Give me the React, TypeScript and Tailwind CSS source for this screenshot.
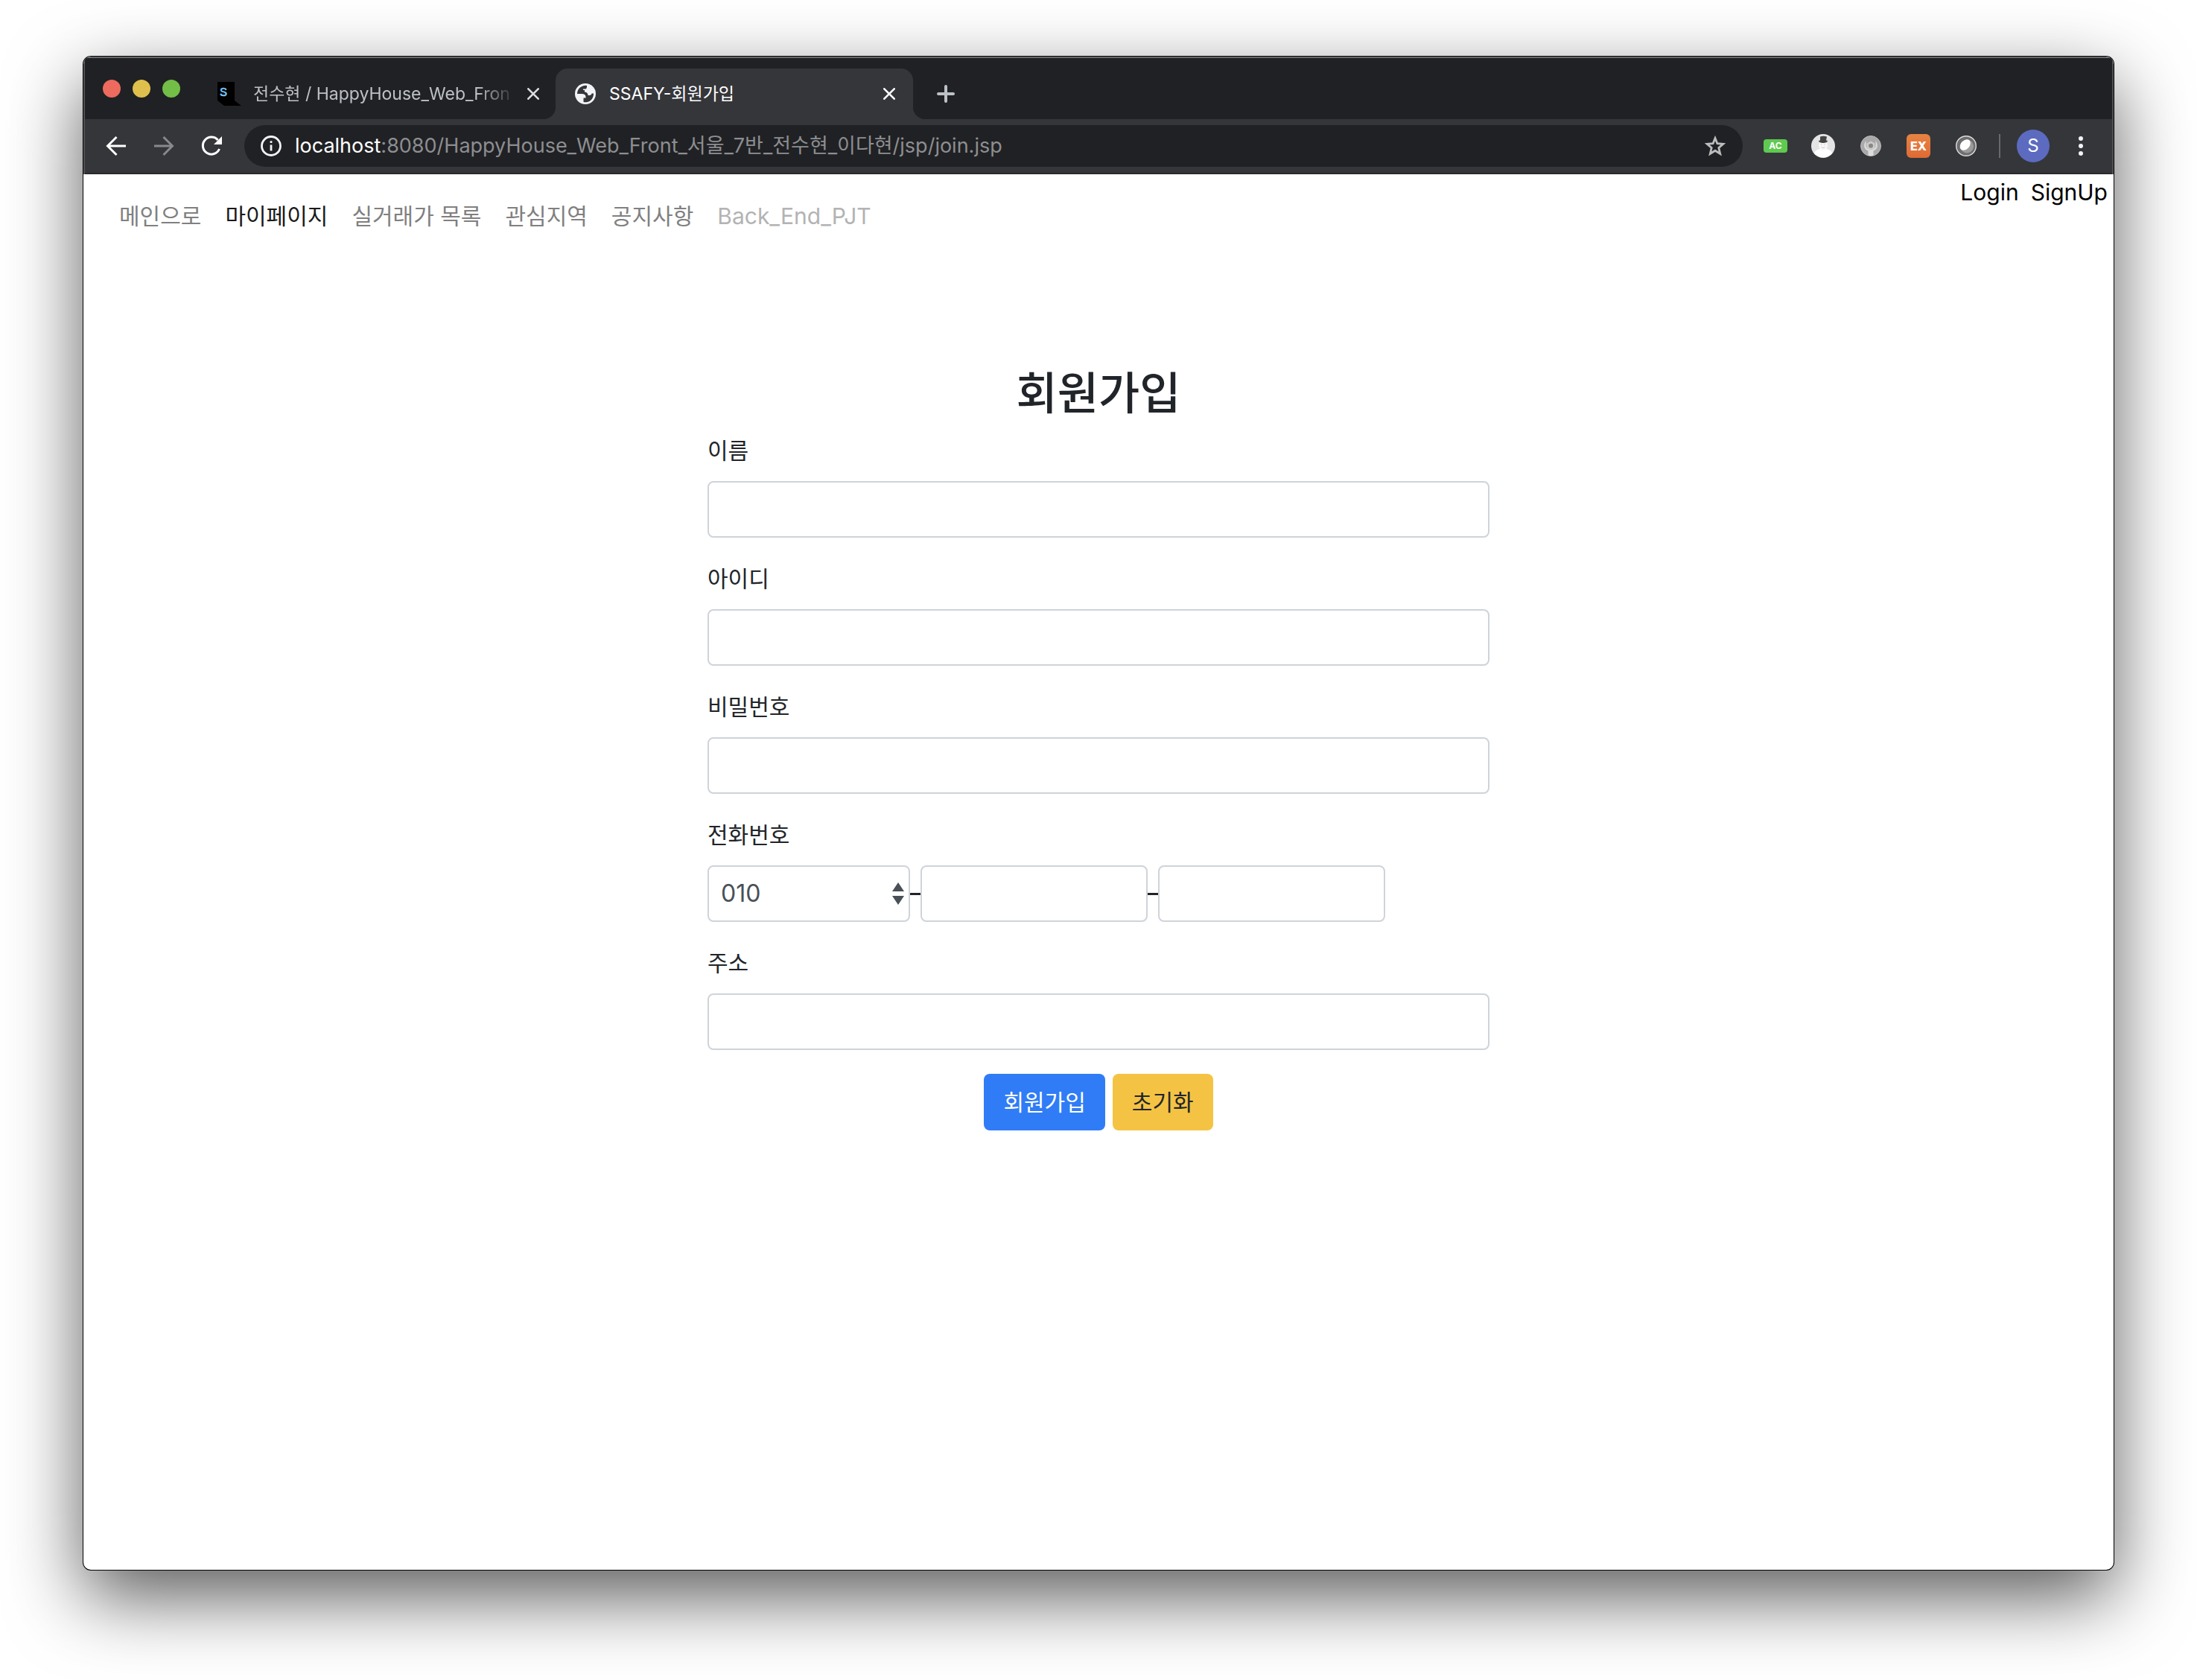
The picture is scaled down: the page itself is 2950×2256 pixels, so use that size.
import type { ReactNode } from "react";

const links = [
  { label: "메인으로", tone: "text-[#808080]" },
  { label: "마이페이지", tone: "text-[#1a1a1a]" },
  { label: "실거래가 목록", tone: "text-[#808080]" },
  { label: "관심지역", tone: "text-[#808080]" },
  { label: "공지사항", tone: "text-[#808080]" },
  { label: "Back_End_PJT", tone: "text-[#b3b3b3]" },
];

const inputClass =
  "h-[76px] rounded-lg border-2 border-[#ced4da] bg-white px-6 text-[32px] text-[#495057] outline-none";

function Field({ id, label, children }: { id: string; label: string; children: ReactNode }) {
  return (
    <div className="mb-8">
      <label htmlFor={id} className="mb-[18px] block w-fit leading-[46px]">
        {label}
      </label>
      {children}
    </div>
  );
}

function CloseIcon() {
  return (
    <svg viewBox="0 0 16 16" className="size-4" fill="none" stroke="currentColor" strokeWidth="2.6" strokeLinecap="round">
      <path d="M1.3 1.3 14.7 14.7M14.7 1.3 1.3 14.7" />
    </svg>
  );
}

function Tabs() {
  return (
    <div className="flex h-[82px] bg-[#202124] pt-3.5">
      <div className="flex gap-4 pt-[15px] pl-6">
        <button aria-label="Close window" className="size-6 rounded-full bg-[#ed6a5e]" />
        <button aria-label="Minimize window" className="size-6 rounded-full bg-[#e0c04c]" />
        <button aria-label="Zoom window" className="size-6 rounded-full bg-[#72be47]" />
      </div>
      <div className="ml-[50px] flex h-[68px] w-[454px] items-center pr-[22px]">
        <svg viewBox="0 0 32 32" className="size-8 shrink-0">
          <path d="M0 0h23v25l9 7H9l-9-7Z" fill="#000" />
          <text x="3" y="19" fontFamily="Liberation Mono" fontSize="17" fill="#7cc7f5" stroke="#7cc7f5" strokeWidth="0.5">
            S
          </text>
        </svg>
        <span className="ml-4 flex-1 text-[23px] whitespace-nowrap text-[#bdc1c6] [mask-image:linear-gradient(to_right,#000_85%,transparent)]">
          전수현 / HappyHouse_Web_Fron
        </span>
        <button aria-label="Close tab" className="ml-3.5 text-[#dadce0]">
          <CloseIcon />
        </button>
      </div>
      <div className="relative flex h-[68px] w-[480px] items-center rounded-t-2xl bg-[#35363a] pr-6 pl-[26px] text-white">
        <svg viewBox="0 0 16 16" className="absolute bottom-0 -left-4 size-4">
          <path d="M16 0v16H0A16 16 0 0 0 16 0Z" fill="#35363a" />
        </svg>
        <svg viewBox="0 0 16 16" className="absolute -right-4 bottom-0 size-4">
          <path d="M0 0v16h16A16 16 0 0 1 0 0Z" fill="#35363a" />
        </svg>
        <svg viewBox="0 0 28 28" className="size-7">
          <circle cx="14" cy="14" r="14" fill="#f1f3f4" />
          <path
            d="M16 3A11 11 0 0 0 3 14h6c3.500 0 5.500 1.500 5.500 4v1.500h-3V25A11 11 0 0 0 25 13.500h-2.500c0 1.500-1.500 2.500-3 2.500h-2c0-3-2-4.500-4.500-4.500V9H11V7.500h3c1.500 0 2-1.500 2-3Z"
            fill="#35363a"
          />
        </svg>
        <span className="ml-[18px] flex-1 text-[23px] whitespace-nowrap">SSAFY-회원가입</span>
        <button aria-label="Close tab">
          <CloseIcon />
        </button>
      </div>
      <button aria-label="New tab" className="ml-8 flex h-[68px] items-center text-[#bdc1c6]">
        <svg viewBox="0 0 24 24" className="size-6" fill="none" stroke="currentColor" strokeWidth="4" strokeLinecap="round">
          <path d="M12 2v20M2 12h20" />
        </svg>
      </button>
    </div>
  );
}

function Toolbar() {
  return (
    <div className="flex h-[74px] items-center border-b-2 border-[#28282b] bg-[#35363a] pr-[39px] pl-7">
      <button aria-label="Back" className="text-white">
        <svg viewBox="0 0 28 28" className="size-7" fill="none" stroke="currentColor" strokeWidth="3">
          <path d="M27 14H3M14.500 2 2.500 14l12 12" />
        </svg>
      </button>
      <button aria-label="Forward" className="ml-9 text-[#88898c]">
        <svg viewBox="0 0 28 28" className="size-7" fill="none" stroke="currentColor" strokeWidth="3">
          <path d="M1 14h24M13.500 2l12 12-12 12" />
        </svg>
      </button>
      <button aria-label="Reload" className="ml-9 text-white">
        <svg viewBox="0 0 28 28" className="size-7" fill="none" stroke="currentColor" strokeWidth="3">
          <path d="M24.500 18A11.500 11.500 0 1 1 22.500 6" />
          <path d="M28 1v11H17Z" fill="currentColor" stroke="none" />
        </svg>
      </button>
      <div className="ml-[30px] flex h-14 flex-1 items-center rounded-full bg-[#202124] px-[22px]">
        <svg viewBox="0 0 28 28" className="size-7 shrink-0" fill="none" stroke="#f1f3f4" strokeWidth="2.800">
          <circle cx="14" cy="14" r="12.500" />
          <path d="M14 12.500v8M14 7.200v2.800" />
        </svg>
        <div className="ml-[18px] flex-1 text-[27px] whitespace-nowrap text-[#8d8e91]">
          <span className="text-white">localhost</span>:8080/HappyHouse_Web_Front_서울_7반_전수현_이다현/jsp/join.jsp
        </div>
        <button aria-label="Bookmark this page">
          <svg viewBox="0 0 30 30" className="size-[30px]" fill="none" stroke="#bdbdbd" strokeWidth="2.800">
            <path d="m15 4.500 2.900 7.200 7.900.6-6 5.200 1.900 7.900L15 21.200l-6.700 4.200 1.900-7.900-6-5.200 7.900-.6Z" />
          </svg>
        </button>
      </div>
      <div className="ml-7 flex items-center gap-8">
        <button className="h-[18px] w-8 rounded bg-[#5fca50] text-center text-[12px] leading-[18px] font-bold text-white">AC</button>
        <button aria-label="Hat extension">
          <svg viewBox="0 0 32 32" className="size-8">
            <circle cx="16" cy="16" r="16" fill="#e4e4e4" />
            <path d="M4 26c1-4 4-5 8-6h8c4 1 7 2 8 6a16 16 0 0 1-24 0Z" fill="#fff" />
            <ellipse cx="16" cy="15.500" rx="6" ry="6.500" fill="#f7f7f7" />
            <path d="M13.500 17c1 2 4 2 5 0M13 14h1.500M17.500 14H19" fill="none" stroke="#ccc" />
            <path d="M12 3.500c3-1 6-1 9 0l-1 5 2 .5c0 4-12 4-12 0l2-.5Z" fill="#444" />
          </svg>
        </button>
        <button aria-label="Wrench extension">
          <svg viewBox="0 0 32 32" className="size-8">
            <circle cx="16" cy="16" r="13.500" fill="#a9a9a9" stroke="#bbb" />
            <path d="M9.500 9C6 14 6 20 12.500 22.500V29h7v-6.500C26 20 26 14 22.500 9v7c0 2-3 5-6.500 5s-6.500-3-6.500-5Z" fill="#dcdcdc" />
            <path d="m16 9.500 5.500 3v6.500L16 22l-5.500-3v-6.500Z" fill="#ccc" />
            <circle cx="16" cy="15.700" r="3" fill="#888" />
          </svg>
        </button>
        <button className="size-8 rounded-md bg-linear-to-b from-[#e68443] to-[#e06a34] text-center text-[16px] leading-8 font-extrabold text-white">
          EX
        </button>
        <button aria-label="Pearl extension">
          <svg viewBox="0 0 32 32" className="size-8">
            <circle cx="16" cy="16" r="13.300" fill="#6e6e6e" stroke="#ddd" strokeWidth="1.400" />
            <circle cx="17" cy="16.500" r="9" fill="#9c9c9c" />
            <ellipse cx="14.700" cy="14.500" rx="5.800" ry="8.300" transform="rotate(42 14.700 14.500)" fill="#fff" />
          </svg>
        </button>
      </div>
      <div className="ml-7 h-8 w-0.5 bg-[#68696c]" />
      <button className="ml-[22px] size-11 rounded-full bg-[#5c6bc0] text-center text-[24px] text-white">S</button>
      <button aria-label="Menu" className="ml-[39px] flex flex-col gap-1">
        <span className="size-1.5 rounded-full bg-[#f1f3f4]" />
        <span className="size-1.5 rounded-full bg-[#f1f3f4]" />
        <span className="size-1.5 rounded-full bg-[#f1f3f4]" />
      </button>
    </div>
  );
}

export default function App() {
  return (
    <div className="flex min-h-screen bg-white px-28 pt-[76px] pb-[148px] font-[Inter,'Noto_Sans_CJK_KR',sans-serif]">
      <div className="flex flex-1 flex-col overflow-hidden rounded-[10px] bg-white shadow-[0_0_0_1px_#000,0_36px_100px_rgba(0,0,0,0.65)]">
        <div className="rounded-t-[10px] border-x-2 border-t-2 border-x-[#505154] border-t-[#66686a] bg-[#202124]">
          <Tabs />
          <Toolbar />
        </div>
        <header className="flex items-start justify-between text-[30px] leading-12">
          <nav className="flex gap-8 pt-8 pl-12">
            {links.map((link) => (
              <a key={link.label} href="#" className={link.tone}>
                {link.label}
              </a>
            ))}
          </nav>
          <div className="flex gap-4 pr-2 text-black">
            <a href="#">Login</a>
            <a href="#">SignUp</a>
          </div>
        </header>
        <form className="mx-auto mt-[176px] w-[1050px] text-[30px] leading-12 text-[#212529]">
          <h1 className="mb-4 text-center text-[60px] leading-[76px] font-medium">회원가입</h1>
          <Field id="name" label="이름">
            <input id="name" className={`w-full ${inputClass}`} />
          </Field>
          <Field id="userid" label="아이디">
            <input id="userid" className={`w-full ${inputClass}`} />
          </Field>
          <Field id="password" label="비밀번호">
            <input id="password" type="password" className={`w-full ${inputClass}`} />
          </Field>
          <Field id="tel" label="전화번호">
            <div className="flex items-center">
              <div className="relative">
                <select
                  id="tel"
                  className="block h-[76px] w-[272px] appearance-none rounded-lg border-2 border-[#ced4da] bg-white px-4 text-[32px] text-[#495057]"
                >
                  <option>010</option>
                </select>
                <svg viewBox="0 0 16 30" className="pointer-events-none absolute top-[23px] right-2 h-[30px] w-4" fill="#495057">
                  <path d="M8 0l8 12H0ZM8 30l8-12H0Z" />
                </svg>
              </div>
              <span className="h-[3px] w-3.5 bg-[#212529]" />
              <input aria-label="전화번호 가운데 자리" className={`w-[305px] ${inputClass}`} />
              <span className="h-[3px] w-3.5 bg-[#212529]" />
              <input aria-label="전화번호 끝자리" className={`w-[305px] ${inputClass}`} />
            </div>
          </Field>
          <Field id="address" label="주소">
            <input id="address" className={`w-full ${inputClass}`} />
          </Field>
          <div className="flex justify-center gap-2.5">
            <button type="button" className="h-[76px] rounded-lg bg-[#307cf6] px-[26px] text-white">
              회원가입
            </button>
            <button type="reset" className="h-[76px] rounded-lg bg-[#f5c344] px-[26px]">
              초기화
            </button>
          </div>
        </form>
      </div>
    </div>
  );
}
